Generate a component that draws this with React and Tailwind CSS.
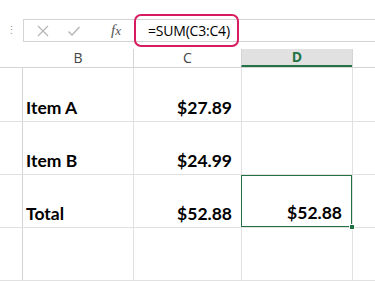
import React from 'react';

const cellFont = { fontFamily: 'Lato, "Open Sans", sans-serif' };

const rows = [
  { label: 'Item A', c: '$27.89', d: '' },
  { label: 'Item B', c: '$24.99', d: '' },
  { label: 'Total', c: '$52.88', d: '$52.88', selected: true },
  { label: '', c: '', d: '' },
];

const App = () => {
  return (
    <div className="relative w-[375px] h-[281px] overflow-hidden bg-white" style={{ fontFamily: '"Open Sans", sans-serif' }}>
      {/* formula bar */}
      <div className="flex h-[49px] pt-[19px]">
        <div className="w-[23px] h-[23px] flex items-center justify-center text-[#9a9a9a] text-[11px]">⋮</div>
        <div className="flex-1 h-[23px] flex items-center border border-r-0 border-[#d4d4d4]">
          <svg width="14" height="14" viewBox="0 0 14 14" className="ml-[12px]">
            <path d="M2 2 L12 12 M12 2 L2 12" stroke="#b5b5b5" strokeWidth="1.2" />
          </svg>
          <svg width="14" height="14" viewBox="0 0 14 14" className="ml-[17px]">
            <path d="M1.5 7.5 L5 11 L12.5 3" stroke="#b5b5b5" strokeWidth="1.4" fill="none" />
          </svg>
          <span className="ml-[30px] text-[#555] text-[15px] italic" style={{ fontFamily: '"Liberation Serif", serif' }}>
            f<span className="text-[13px]">x</span>
          </span>
          <span className="ml-[27px] text-[14px] tracking-[-0.2px] text-black leading-none">=SUM(C3:C4)</span>
        </div>
      </div>

      {/* annotation around the formula */}
      <div className="absolute left-[134px] top-[14px] w-[105px] h-[33px] border-2 border-[#d81b60] rounded-[7px]" />

      {/* column headers */}
      <div className="flex h-[19px] border-b border-[#d4d4d4] text-[14px] leading-none">
        <div className="w-[23px]" />
        <div className="w-[110px] flex items-center justify-center text-[#444]">B</div>
        <div className="w-[108px] flex items-center justify-center text-[#444] border-l border-[#d4d4d4]">C</div>
        <div className="w-[111px] flex items-center justify-center bg-[#e1e1e1] text-[#217346] font-bold border-l border-[#d4d4d4] border-b-2 border-b-[#217346]">D</div>
        <div className="flex-1 border-l border-[#d4d4d4]" />
      </div>

      {/* grid */}
      {rows.map((r, i) => (
        <div key={i} className={`flex ${i === 0 ? 'h-[54px]' : 'h-[53px]'} border-b border-[#e1e1e1] text-[17.5px] font-bold text-black leading-none`} style={cellFont}>
          <div className="w-[23px] border-r border-[#d4d4d4]" />
          <div className="w-[110px] flex items-end pl-[3px] pb-[5px]">{r.label}</div>
          <div className="w-[108px] flex items-end justify-end pr-[9px] pb-[5px] border-l border-[#e1e1e1]">{r.c}</div>
          <div className={`relative w-[111px] flex items-end justify-end pr-[9px] pb-[5px] border-l ${r.selected ? 'border border-[#217346]' : 'border-[#e1e1e1]'}`}>
            {r.d}
            {r.selected && <div className="absolute right-[-4px] bottom-[-4px] w-[6px] h-[6px] bg-[#217346] border border-white" />}
          </div>
          <div className="flex-1 border-l border-[#e1e1e1]" />
        </div>
      ))}
    </div>
  );
};

export default App;
